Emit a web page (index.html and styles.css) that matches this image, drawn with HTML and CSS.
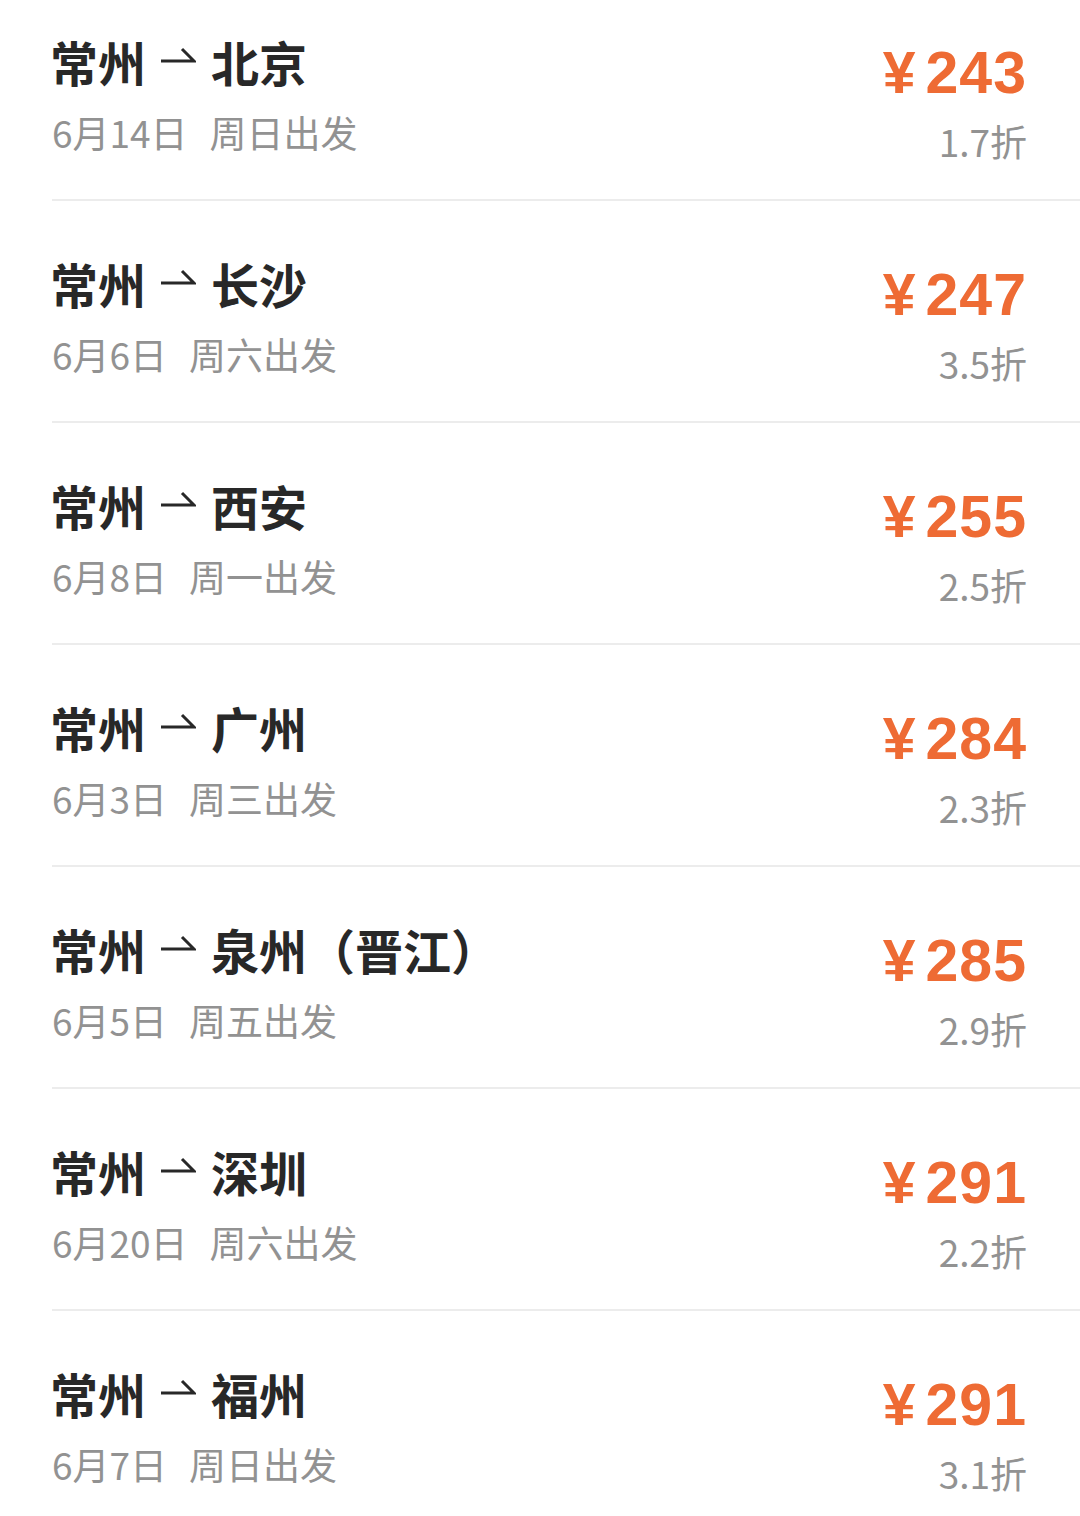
FILE: index.html
```html
<!DOCTYPE html>
<html lang="zh-CN">
<head>
    <meta charset="UTF-8">
    <meta name="viewport" content="width=device-width, initial-scale=1.0">
    <title>特价机票</title>
    <link rel="stylesheet" href="styles.css">
</head>
<body>
    <ul class="trip-list">
        <li class="trip">
            <div class="trip-info">
                <div class="route">常州<svg class="arrow" viewBox="0 0 36 28"><path d="M1 14H34L22 2"/></svg>北京</div>
                <div class="date"><span>6月14日</span><span>周日出发</span></div>
            </div>
            <div class="trip-price">
                <div class="price"><span class="yen">¥</span>243</div>
                <div class="discount">1.7折</div>
            </div>
        </li>
        <li class="trip">
            <div class="trip-info">
                <div class="route">常州<svg class="arrow" viewBox="0 0 36 28"><path d="M1 14H34L22 2"/></svg>长沙</div>
                <div class="date"><span>6月6日</span><span>周六出发</span></div>
            </div>
            <div class="trip-price">
                <div class="price"><span class="yen">¥</span>247</div>
                <div class="discount">3.5折</div>
            </div>
        </li>
        <li class="trip">
            <div class="trip-info">
                <div class="route">常州<svg class="arrow" viewBox="0 0 36 28"><path d="M1 14H34L22 2"/></svg>西安</div>
                <div class="date"><span>6月8日</span><span>周一出发</span></div>
            </div>
            <div class="trip-price">
                <div class="price"><span class="yen">¥</span>255</div>
                <div class="discount">2.5折</div>
            </div>
        </li>
        <li class="trip">
            <div class="trip-info">
                <div class="route">常州<svg class="arrow" viewBox="0 0 36 28"><path d="M1 14H34L22 2"/></svg>广州</div>
                <div class="date"><span>6月3日</span><span>周三出发</span></div>
            </div>
            <div class="trip-price">
                <div class="price"><span class="yen">¥</span>284</div>
                <div class="discount">2.3折</div>
            </div>
        </li>
        <li class="trip">
            <div class="trip-info">
                <div class="route">常州<svg class="arrow" viewBox="0 0 36 28"><path d="M1 14H34L22 2"/></svg>泉州（晋江）</div>
                <div class="date"><span>6月5日</span><span>周五出发</span></div>
            </div>
            <div class="trip-price">
                <div class="price"><span class="yen">¥</span>285</div>
                <div class="discount">2.9折</div>
            </div>
        </li>
        <li class="trip">
            <div class="trip-info">
                <div class="route">常州<svg class="arrow" viewBox="0 0 36 28"><path d="M1 14H34L22 2"/></svg>深圳</div>
                <div class="date"><span>6月20日</span><span>周六出发</span></div>
            </div>
            <div class="trip-price">
                <div class="price"><span class="yen">¥</span>291</div>
                <div class="discount">2.2折</div>
            </div>
        </li>
        <li class="trip">
            <div class="trip-info">
                <div class="route">常州<svg class="arrow" viewBox="0 0 36 28"><path d="M1 14H34L22 2"/></svg>福州</div>
                <div class="date"><span>6月7日</span><span>周日出发</span></div>
            </div>
            <div class="trip-price">
                <div class="price"><span class="yen">¥</span>291</div>
                <div class="discount">3.1折</div>
            </div>
        </li>
    </ul>
</body>
</html>
```
FILE: styles.css
```css
body {
    margin: 0;
    background: #fff;
    font-family: "Noto Sans CJK SC", sans-serif;
    overflow: hidden;
}
.trip-list {
    list-style: none;
    margin: -21px 0 0 52px;
    padding: 0;
}
.trip {
    display: flex;
    justify-content: space-between;
    height: 220px;
    padding-right: 53px;
    border-bottom: 2px solid #ececec;
}
.trip-info {
    padding-top: 53px;
}
.route {
    display: flex;
    align-items: center;
    height: 58px;
    font-size: 48px;
    font-weight: 700;
    color: #282828;
    margin-left: -2px;
}
.arrow {
    width: 36px;
    height: 28px;
    margin: 0 15px 0 14px;
}
.arrow path {
    fill: none;
    stroke: #282828;
    stroke-width: 3;
}
.date {
    margin-top: 18px;
    font-size: 37px;
    line-height: 48px;
    color: #929292;
}
.date span + span {
    margin-left: 22px;
}
.trip-price {
    padding-top: 62px;
    text-align: right;
}
.price {
    font-family: "Liberation Sans", "Noto Sans CJK SC", sans-serif;
    font-size: 59px;
    line-height: 64px;
    font-weight: 700;
    color: #ee6b34;
    letter-spacing: 1px;
}
.yen {
    margin-right: 9px;
}
.discount {
    margin-top: 12px;
    font-size: 37px;
    line-height: 48px;
    color: #929292;
}
```
